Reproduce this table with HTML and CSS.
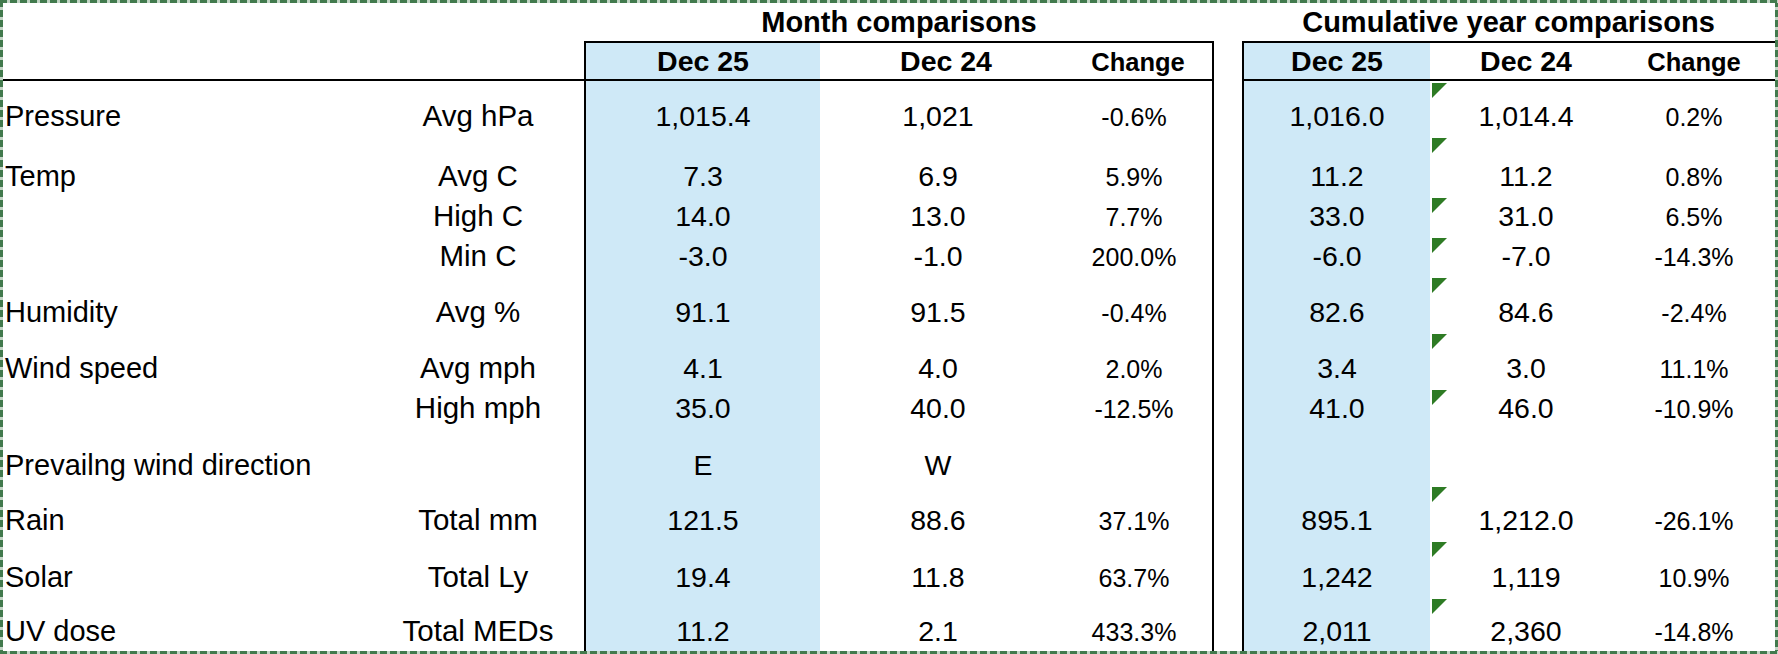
FILE: index.html
```html
<!DOCTYPE html>
<html>
<head>
<meta charset="utf-8">
<link rel="stylesheet" href="styles.css">
</head>
<body>
<div class="sheet">
  <div class="side">
    <div class="title"></div>
    <div class="side-head"></div>
    <div class="rows side-rows">
      <div class="cell lbl">Pressure</div><div class="cell unit">Avg hPa</div>
      <div class="cell lbl">Temp</div><div class="cell unit">Avg C</div>
      <div class="cell lbl"></div><div class="cell unit">High C</div>
      <div class="cell lbl"></div><div class="cell unit">Min C</div>
      <div class="cell lbl">Humidity</div><div class="cell unit">Avg %</div>
      <div class="cell lbl">Wind speed</div><div class="cell unit">Avg mph</div>
      <div class="cell lbl"></div><div class="cell unit">High mph</div>
      <div class="cell lbl">Prevailng wind direction</div><div class="cell unit"></div>
      <div class="cell lbl">Rain</div><div class="cell unit">Total mm</div>
      <div class="cell lbl">Solar</div><div class="cell unit">Total Ly</div>
      <div class="cell lbl">UV dose</div><div class="cell unit">Total MEDs</div>
    </div>
  </div>

  <div class="block month">
    <div class="title">Month comparisons</div>
    <div class="box">
      <div class="head">
        <div class="hcell cur">Dec 25</div>
        <div class="hcell prev">Dec 24</div>
        <div class="hcell chg">Change</div>
      </div>
      <div class="rows">
        <div class="cell num cur">1,015.4</div><div class="cell num">1,021</div><div class="cell pct">-0.6%</div>
        <div class="cell num cur">7.3</div><div class="cell num">6.9</div><div class="cell pct">5.9%</div>
        <div class="cell num cur">14.0</div><div class="cell num">13.0</div><div class="cell pct">7.7%</div>
        <div class="cell num cur">-3.0</div><div class="cell num">-1.0</div><div class="cell pct">200.0%</div>
        <div class="cell num cur">91.1</div><div class="cell num">91.5</div><div class="cell pct">-0.4%</div>
        <div class="cell num cur">4.1</div><div class="cell num">4.0</div><div class="cell pct">2.0%</div>
        <div class="cell num cur">35.0</div><div class="cell num">40.0</div><div class="cell pct">-12.5%</div>
        <div class="cell num cur">E</div><div class="cell num">W</div><div class="cell pct"></div>
        <div class="cell num cur">121.5</div><div class="cell num">88.6</div><div class="cell pct">37.1%</div>
        <div class="cell num cur">19.4</div><div class="cell num">11.8</div><div class="cell pct">63.7%</div>
        <div class="cell num cur">11.2</div><div class="cell num">2.1</div><div class="cell pct">433.3%</div>
      </div>
    </div>
  </div>

  <div class="gap"></div>

  <div class="block cum">
    <div class="title">Cumulative year comparisons</div>
    <div class="box">
      <div class="head">
        <div class="hcell cur">Dec 25</div>
        <div class="hcell">Dec 24</div>
        <div class="hcell chg">Change</div>
      </div>
      <div class="rows">
        <div class="cell num cur">1,016.0</div><div class="cell num flag">1,014.4</div><div class="cell pct">0.2%</div>
        <div class="cell num cur">11.2</div><div class="cell num flag">11.2</div><div class="cell pct">0.8%</div>
        <div class="cell num cur">33.0</div><div class="cell num flag">31.0</div><div class="cell pct">6.5%</div>
        <div class="cell num cur">-6.0</div><div class="cell num flag">-7.0</div><div class="cell pct">-14.3%</div>
        <div class="cell num cur">82.6</div><div class="cell num flag">84.6</div><div class="cell pct">-2.4%</div>
        <div class="cell num cur">3.4</div><div class="cell num flag">3.0</div><div class="cell pct">11.1%</div>
        <div class="cell num cur">41.0</div><div class="cell num flag">46.0</div><div class="cell pct">-10.9%</div>
        <div class="cell num cur"></div><div class="cell num"></div><div class="cell pct"></div>
        <div class="cell num cur">895.1</div><div class="cell num flag">1,212.0</div><div class="cell pct">-26.1%</div>
        <div class="cell num cur">1,242</div><div class="cell num flag">1,119</div><div class="cell pct">10.9%</div>
        <div class="cell num cur">2,011</div><div class="cell num flag">2,360</div><div class="cell pct">-14.8%</div>
      </div>
    </div>
  </div>
</div>
</body>
</html>
```

FILE: styles.css
```css
:root {
  --rows: 55px 60px 40px 40px 56px 56px 40px 57px 55px 57px 54px;
  --blue: #cfe9f7;
  --line: #000;
}

html, body {
  margin: 0;
  padding: 0;
  background: #fff;
}

body {
  font-family: "Liberation Sans", Arial, Helvetica, sans-serif;
  color: #000;
}

.sheet {
  position: relative;
  width: 1778px;
  height: 654px;
  box-sizing: border-box;
  padding: 3px;
  display: flex;
  overflow: hidden;
}

/* marching-ants copy selection frame drawn over the sheet */
.sheet::after {
  content: "";
  position: absolute;
  inset: 0;
  pointer-events: none;
  background:
    repeating-linear-gradient(90deg, #427a4d 0 7px, #c3d5c6 7px 10px) left top / 100% 3px no-repeat,
    repeating-linear-gradient(90deg, #427a4d 0 7px, #c3d5c6 7px 10px) left bottom / 100% 3px no-repeat,
    repeating-linear-gradient(180deg, #427a4d 0 7px, #c3d5c6 7px 10px) left top / 3px 100% no-repeat,
    repeating-linear-gradient(180deg, #427a4d 0 7px, #c3d5c6 7px 10px) right top / 3px 100% no-repeat;
}

.title {
  height: 38px;
  box-sizing: border-box;
  padding-top: 3px;
  font-size: 29px;
  font-weight: bold;
  line-height: 32px;
  text-align: center;
  white-space: nowrap;
}

/* left label area */
.side {
  width: 581px;
  flex: none;
}

.side-head {
  height: 38px;
  border-bottom: 2px solid var(--line);
}

.rows {
  display: grid;
  grid-template-rows: var(--rows);
}

.side-rows {
  grid-template-columns: 369px 212px;
}

.cell {
  display: flex;
  align-items: flex-end;
  justify-content: center;
  box-sizing: border-box;
  padding-bottom: 4px;
  line-height: 32px;
  white-space: nowrap;
}

.lbl {
  justify-content: flex-start;
  padding-left: 2px;
  font-size: 29px;
}

.unit {
  font-size: 29.5px;
}

.num {
  font-size: 28.5px;
}

.pct {
  font-size: 25px;
  padding-bottom: 3px;
}

/* comparison blocks */
.block {
  flex: none;
}

.month {
  width: 630px;
}

.gap {
  width: 28px;
  flex: none;
}

.cum {
  width: 533px;
}

.box {
  border-top: 2px solid var(--line);
  border-left: 2px solid var(--line);
  height: 610px;
}

.month .box {
  border-right: 2px solid var(--line);
}

.head {
  display: grid;
  height: 36px;
  border-bottom: 2px solid var(--line);
}

.month .head,
.month .rows {
  grid-template-columns: 234px 236px 156px;
}

.cum .head,
.cum .rows {
  grid-template-columns: 186px 192px 144px;
}

.hcell {
  display: flex;
  align-items: flex-end;
  justify-content: center;
  padding-bottom: 2px;
  font-size: 28.5px;
  font-weight: bold;
  line-height: 32px;
  white-space: nowrap;
}

.month .hcell.prev {
  padding-left: 16px;
}

.hcell.chg {
  font-size: 25.5px;
  padding-bottom: 1px;
}

.month .hcell.chg {
  padding-left: 8px;
}

.cur {
  background: var(--blue);
}

/* Excel error indicator triangle */
.flag {
  position: relative;
}

.flag::before {
  content: "";
  position: absolute;
  left: 2px;
  top: 2px;
  width: 0;
  height: 0;
  border-top: 15px solid #2e7b24;
  border-right: 15px solid transparent;
}
```
